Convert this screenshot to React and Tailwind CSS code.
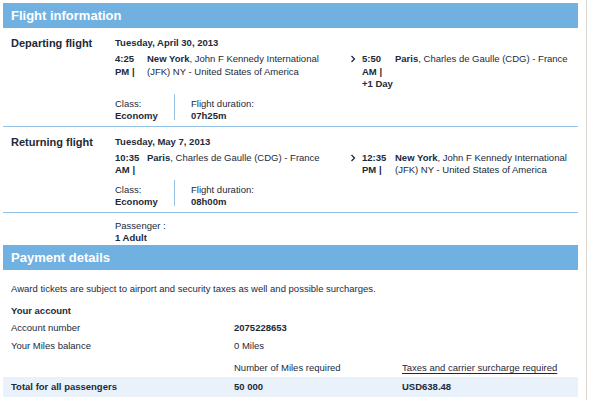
import React from "react";

const line = "border-[#95c3e8]";

const Chevron = () => (
  <svg width="6" height="8" viewBox="0 0 6 8" className="block">
    <polyline points="1.5,1 4.5,4 1.5,7" fill="none" stroke="#1c2a3a" strokeWidth="1.3" />
  </svg>
);

const Stop = ({ width, timeW, time, city, rest }) => (
  <div className={`flex ${width}`}>
    <div className={`${timeW} font-bold`}>
      {time.map((t) => (
        <div key={t}>{t}</div>
      ))}
    </div>
    <div className="whitespace-nowrap">
      <div>
        <span className="font-bold">{city}</span>
        {rest[0]}
      </div>
      {rest[1] && <div>{rest[1]}</div>}
    </div>
  </div>
);

const Flight = ({ label, date, dep, arr, duration }) => (
  <div className={`flex pl-2 pt-2 pb-1 border-b ${line}`}>
    <div className="w-[104px] text-[11px] font-bold leading-[14px]">{label}</div>
    <div className="flex-1">
      <div className="font-bold leading-[14px]">{date}</div>
      <div className="mt-[3px] flex leading-[12.5px]">
        <Stop width="w-[235px]" timeW="w-[32px]" {...dep} />
        <div className="w-[12px] pt-[2px]">
          <Chevron />
        </div>
        <Stop width="flex-1" timeW="w-[33px]" {...arr} />
      </div>
      <div className="mt-[7px] flex leading-[12px]">
        <div className="w-[59px]">
          <div>Class:</div>
          <div className="font-bold">Economy</div>
        </div>
        <div className="w-px bg-[#95c3e8] -mt-[3.5px] mb-[1.5px]" />
        <div className="pl-4">
          <div>Flight duration:</div>
          <div className="font-bold">{duration}</div>
        </div>
      </div>
    </div>
  </div>
);

const Bar = ({ children, className = "" }) => (
  <div className={`h-[25px] bg-[#71b1e1] flex items-center pl-2 text-[13px] font-bold text-white ${className}`}>
    {children}
  </div>
);

const Row = ({ a, b, c, className = "" }) => (
  <div className={`flex items-center pl-2 ${className}`}>
    <div className="w-[223px]">{a}</div>
    <div className="w-[168px]">{b}</div>
    <div>{c}</div>
  </div>
);

export default function App() {
  return (
    <div
      className="w-[591px] h-[400px] bg-white overflow-hidden text-[9.5px] text-[#1c2a3a]"
      style={{ fontFamily: '"Liberation Sans", Arial, Helvetica, sans-serif' }}
    >
      <div className="w-[587px] h-full border-r border-[#dcd8cf] pl-[3px] pt-[3px]">
        <div className="w-[575px]">
          <Bar>Flight information</Bar>
          <Flight
            label="Departing flight"
            date="Tuesday, April 30, 2013"
            dep={{
              time: ["4:25", "PM |"],
              city: "New York",
              rest: [", John F Kennedy International", "(JFK) NY - United States of America"],
            }}
            arr={{
              time: ["5:50", "AM |", "+1 Day"],
              city: "Paris",
              rest: [", Charles de Gaulle (CDG) - France"],
            }}
            duration="07h25m"
          />
          <Flight
            label="Returning flight"
            date="Tuesday, May 7, 2013"
            dep={{
              time: ["10:35", "AM |"],
              city: "Paris",
              rest: [", Charles de Gaulle (CDG) - France"],
            }}
            arr={{
              time: ["12:35", "PM |"],
              city: "New York",
              rest: [", John F Kennedy International", "(JFK) NY - United States of America"],
            }}
            duration="08h00m"
          />
          <div className="pl-[112px] pt-[7.5px] leading-[12px]">
            <div>Passenger :</div>
            <div className="font-bold">1 Adult</div>
          </div>

          <Bar className="mt-px">Payment details</Bar>
          <div className="mt-[10px] h-[18px] flex items-center pl-2">
            Award tickets are subject to airport and security taxes as well and possible surcharges.
          </div>
          <div className="mt-[5px] h-[16px] flex items-center pl-2 font-bold">Your account</div>
          <Row className="h-[18px]" a="Account number" b={<span className="font-bold">2075228653</span>} />
          <Row className="h-[18px]" a="Your Miles balance" b="0 Miles" />
          <Row
            className="h-[18px] mt-[4px]"
            a=""
            b="Number of Miles required"
            c={<span className="underline underline-offset-2">Taxes and carrier surcharge required</span>}
          />
          <Row
            className="h-[20px] bg-[#e9f2fa] font-bold"
            a="Total for all passengers"
            b="50 000"
            c="USD638.48"
          />
        </div>
      </div>
    </div>
  );
}
